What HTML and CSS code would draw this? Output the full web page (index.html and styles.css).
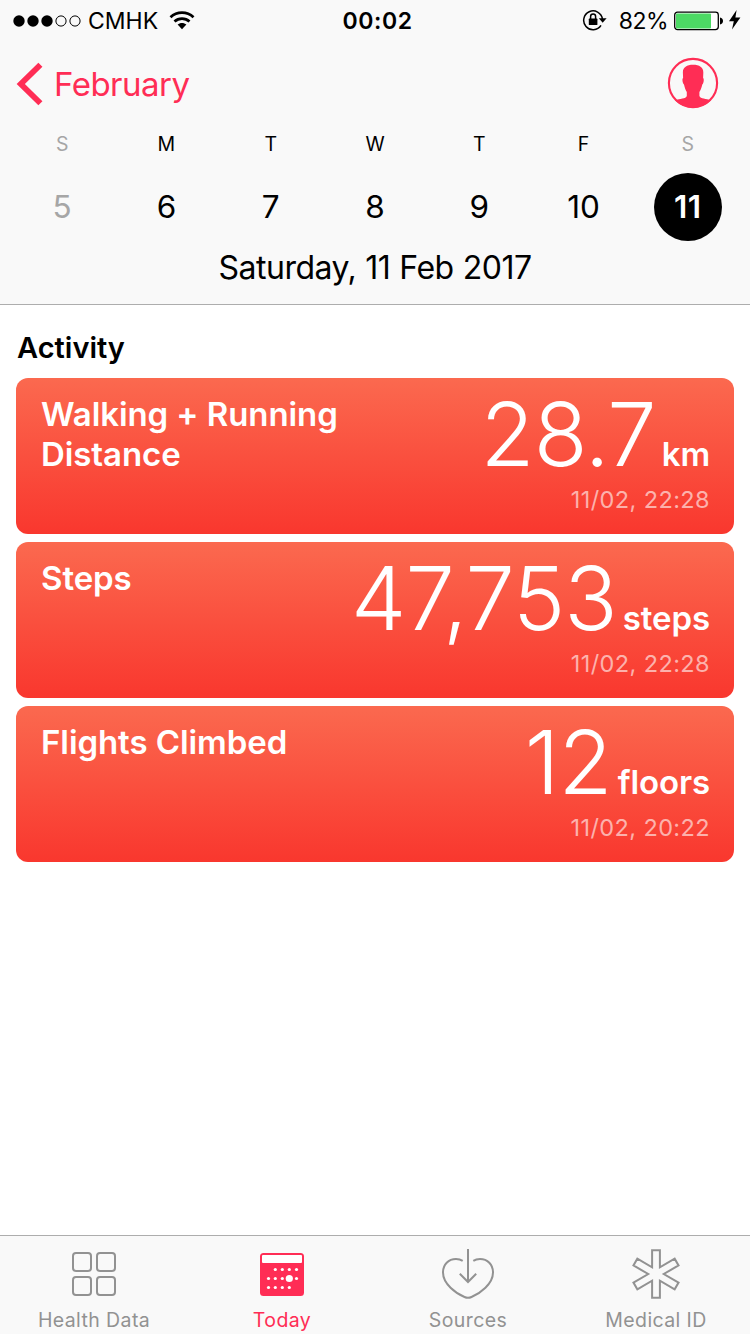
FILE: index.html
```html
<!DOCTYPE html>
<html lang="en">
<head>
    <meta charset="UTF-8">
    <title>Health - Today</title>
    <meta name="viewport" content="width=device-width, initial-scale=1">
    <link rel="stylesheet" href="styles.css">
</head>
<body>
<div class="screen">
    <header class="header">
        <div class="status-bar">
            <div class="status-left">
                <svg class="signal" width="68" height="12" viewBox="0 0 68 12">
                    <circle cx="6" cy="6" r="5.7"/>
                    <circle cx="20" cy="6" r="5.7"/>
                    <circle cx="34" cy="6" r="5.7"/>
                    <circle class="empty" cx="48" cy="6" r="5.1"/>
                    <circle class="empty" cx="62" cy="6" r="5.1"/>
                </svg>
                <span class="carrier">CMHK</span>
                <svg class="wifi" width="26" height="19" viewBox="0 0 26 19">
                    <path d="M1.5 6.2C8 .2 18 .2 24.5 6.2M5.5 10.5C9.8 6.6 16.2 6.6 20.5 10.5" fill="none" stroke="#000" stroke-width="2.8"/>
                    <path d="M8.6 13.6C11 11.4 15 11.4 17.4 13.6L13 18.2Z"/>
                </svg>
            </div>
            <div class="clock">00:02</div>
            <div class="status-right">
                <svg class="lock" width="26" height="22" viewBox="0 0 26 22">
                    <path d="M19 16.4A9.4 9.4 0 1 1 20.4 10" fill="none" stroke="#000" stroke-width="1.5"/>
                    <path d="M16.8 9.2H24.6L20.7 13.8Z"/>
                    <rect x="6.8" y="9.6" width="8.6" height="6.4" rx=".6"/>
                    <path d="M8.6 10V7.6A2.5 2.5 0 0 1 13.6 7.6V10" fill="none" stroke="#000" stroke-width="1.5"/>
                </svg>
                <span class="percent">82%</span>
                <svg class="battery" width="50" height="20" viewBox="0 0 50 20">
                    <rect x=".7" y="1.2" width="43.6" height="17.4" rx="2.8" fill="#fff" stroke="#000" stroke-width="1.3"/>
                    <rect x="2" y="2.6" width="35" height="14.8" rx="1" fill="#4cd964"/>
                    <path d="M46 6.5C50 7 50 13 46 13.5Z"/>
                </svg>
                <svg class="bolt" width="12" height="20" viewBox="0 0 12 20">
                    <path d="M7.6 0L0 11.2H4.8L3 19.4L11.4 7.6H6.4Z"/>
                </svg>
            </div>
        </div>

        <nav class="nav">
            <a class="back">
                <svg width="28" height="44" viewBox="0 0 28 44">
                    <path d="M25.4 2.8L5.8 22L25.4 41.2" fill="none" stroke="#ff2d55" stroke-width="5.8"/>
                </svg>
                <span class="back-label">February</span>
            </a>
            <svg class="avatar" width="52" height="52" viewBox="0 0 52 52">
                <circle cx="26" cy="26" r="24.1" fill="none" stroke="#ff2d55" stroke-width="2.1"/>
                <path d="M15.9 16C15.6 10.5 19.6 7.8 26.1 7.8C32.6 7.8 36.6 10.5 36.3 16L36.1 21C37.2 21.2 36.9 26.5 35.3 27.4C34.7 30.5 33.3 33.5 32.4 35V39C33.5 42 39 41.6 44 43.2C34 53 18 53 8 43.2C13 41.6 18.8 42 19.8 39V35C18.9 33.5 17.6 30.5 17 27.4C15.3 26.5 15 21.2 16.1 21Z" fill="#ff2d55"/>
            </svg>
        </nav>

        <div class="week weekdays">
            <span class="muted">S</span>
            <span>M</span>
            <span>T</span>
            <span>W</span>
            <span>T</span>
            <span>F</span>
            <span class="muted">S</span>
        </div>
        <div class="week days">
            <span class="muted">5</span>
            <span>6</span>
            <span>7</span>
            <span>8</span>
            <span>9</span>
            <span>10</span>
            <span class="selected">11</span>
        </div>
        <div class="full-date">Saturday, 11 Feb 2017</div>
    </header>

    <main class="content">
        <h2 class="section-title">Activity</h2>
        <div class="cards">
            <div class="card">
                <div class="card-name distance">Walking + Running Distance</div>
                <div class="card-data">
                    <div class="reading"><span class="value">28.7</span><span class="unit">km</span></div>
                    <div class="time">11/02, 22:28</div>
                </div>
            </div>
            <div class="card">
                <div class="card-name">Steps</div>
                <div class="card-data">
                    <div class="reading"><span class="value">47,753</span><span class="unit">steps</span></div>
                    <div class="time">11/02, 22:28</div>
                </div>
            </div>
            <div class="card">
                <div class="card-name">Flights Climbed</div>
                <div class="card-data">
                    <div class="reading"><span class="value">12</span><span class="unit">floors</span></div>
                    <div class="time">11/02, 20:22</div>
                </div>
            </div>
        </div>
    </main>

    <footer class="tab-bar">
        <a class="tab">
            <svg width="52" height="52" viewBox="0 0 52 52" fill="none" stroke="#929292" stroke-width="2">
                <rect x="5" y="5" width="18" height="18" rx="3"/>
                <rect x="29" y="5" width="18" height="18" rx="3"/>
                <rect x="5" y="29" width="18" height="18" rx="3"/>
                <rect x="29" y="29" width="18" height="18" rx="3"/>
            </svg>
            <span>Health Data</span>
        </a>
        <a class="tab active">
            <svg width="52" height="52" viewBox="0 0 52 52">
                <rect x="4" y="5" width="44" height="43" rx="3.5" fill="#ff2d55"/>
                <rect x="6" y="7" width="40" height="8" rx="1" fill="#fff"/>
                <g fill="#fff">
                    <circle cx="19.3" cy="21.5" r="1.6"/>
                    <circle cx="26.3" cy="21.5" r="1.6"/>
                    <circle cx="33.3" cy="21.5" r="1.6"/>
                    <circle cx="40.5" cy="21.5" r="1.6"/>
                    <circle cx="12.5" cy="30.5" r="1.6"/>
                    <circle cx="19.3" cy="30.5" r="1.6"/>
                    <circle cx="26.3" cy="30.5" r="1.6"/>
                    <circle cx="33.3" cy="30.5" r="3.6"/>
                    <circle cx="40.5" cy="30.5" r="1.6"/>
                    <circle cx="12.5" cy="39.5" r="1.6"/>
                    <circle cx="19.3" cy="39.5" r="1.6"/>
                    <circle cx="26.3" cy="39.5" r="1.6"/>
                    <circle cx="33.3" cy="39.5" r="1.6"/>
                </g>
            </svg>
            <span>Today</span>
        </a>
        <a class="tab">
            <svg width="52" height="52" viewBox="0 0 52 52" fill="none" stroke="#929292" stroke-width="2">
                <path d="M20.7 12.8C18.5 11.4 16 11 14 11C6.5 11 1 16.5 1 24.5C1 36 14 45.5 22.5 49Q26 50.6 29.5 49C38 45.5 51 36 51 24.5C51 16.5 45.5 11 38 11C36 11 33.5 11.4 31.3 12.8"/>
                <path d="M26 1V34M17.8 25.8L26 34L34.2 25.8"/>
            </svg>
            <span>Sources</span>
        </a>
        <a class="tab">
            <svg width="52" height="52" viewBox="0 0 52 52" fill="none" stroke="#929292" stroke-width="2">
                <path d="M22.1 2.3H29.9V19.25L44.65 10.72L48.55 17.48L33.8 26L48.55 34.52L44.65 41.28L29.9 32.75V49.7H22.1V32.75L7.35 41.28L3.45 34.52L18.2 26L3.45 17.48L7.35 10.72L22.1 19.25Z"/>
            </svg>
            <span>Medical ID</span>
        </a>
    </footer>
</div>
</body>
</html>
```

FILE: styles.css
```css
* { box-sizing: border-box; }
body { margin: 0; background: #fff; color: #000; font-family: Inter, "Liberation Sans", sans-serif; }
svg { display: block; flex: none; }
.screen { width: 750px; height: 1334px; display: flex; flex-direction: column; overflow: hidden; }

/* header */
.header { height: 305px; background: #f9f9f9; border-bottom: 1px solid #adadad; }
.status-bar { height: 40px; padding: 1px 9px 0 13px; display: grid; grid-template-columns: 1fr auto 1fr; align-items: center; font-size: 23px; line-height: 40px; }
.status-left, .status-right { display: flex; align-items: center; }
.status-right { justify-content: flex-end; }
.signal .empty { fill: none; stroke: #000; stroke-width: 1; }
.carrier { margin-left: 7px; }
.wifi { margin-left: 11px; margin-bottom: 2px; }
.clock { font-weight: 600; letter-spacing: 0.6px; margin-left: 1px; }
.lock { margin-bottom: 2px; }
.percent { margin-left: 11px; letter-spacing: -0.5px; }
.battery { margin-left: 6px; margin-bottom: 1px; }
.bolt { margin-left: 5px; margin-bottom: 2px; }

.nav { height: 88px; padding: 0 31px 0 15px; display: flex; justify-content: space-between; align-items: center; }
.back { display: flex; align-items: center; color: #ff2d55; font-size: 33px; letter-spacing: -0.5px; }
.back-label { margin-left: 11px; }
.avatar { margin-bottom: 2px; }

.week { display: grid; grid-template-columns: repeat(7, 1fr); padding: 0 10px; justify-items: center; text-align: center; }
.weekdays { height: 32px; font-size: 19.5px; line-height: 32px; }
.days { height: 81px; padding-top: 13px; font-size: 31.5px; line-height: 68px; }
.muted { color: #a6a6a6; }
.selected { width: 68px; height: 68px; border-radius: 50%; background: #000; color: #fff; font-weight: 600; letter-spacing: 0.5px; }
.full-date { text-align: center; font-size: 32px; line-height: 54px; letter-spacing: -0.5px; word-spacing: 0.5px; }

/* cards */
.content { flex: 1; padding: 0 16px; }
.section-title { margin: 0; padding: 23px 0 10px 1px; font-size: 29px; line-height: 40px; font-weight: 600; }
.cards { display: flex; flex-direction: column; gap: 8px; }
.card { height: 156px; padding: 16px 24px 16px 25px; border-radius: 12px; background: linear-gradient(#fb694f, #f9372e); color: #fff; display: flex; justify-content: space-between; }
.card-name { font-size: 33px; line-height: 40px; font-weight: 600; letter-spacing: -0.08px; }
.card-name.distance { width: 310px; }
.card-data { text-align: right; }
.reading { height: 92px; line-height: 80px; white-space: nowrap; }
.value { font-size: 88px; font-weight: 300; letter-spacing: -0.9px; }
.unit { font-size: 33px; font-weight: 600; margin-left: 6px; letter-spacing: -0.1px; }
.time { font-size: 23.5px; line-height: 28px; letter-spacing: 0.4px; color: rgba(255, 255, 255, 0.6); }

/* tab bar */
.tab-bar { height: 99px; padding-top: 12px; background: #f9f9f9; border-top: 1px solid #adadad; display: grid; grid-template-columns: 188px 188px 184px 192px; }
.tab { display: flex; flex-direction: column; align-items: center; color: #929292; font-size: 19.5px; line-height: 28px; letter-spacing: 0.4px; }
.tab span { margin-top: 6px; }
.tab.active { color: #ff2d55; }
```
